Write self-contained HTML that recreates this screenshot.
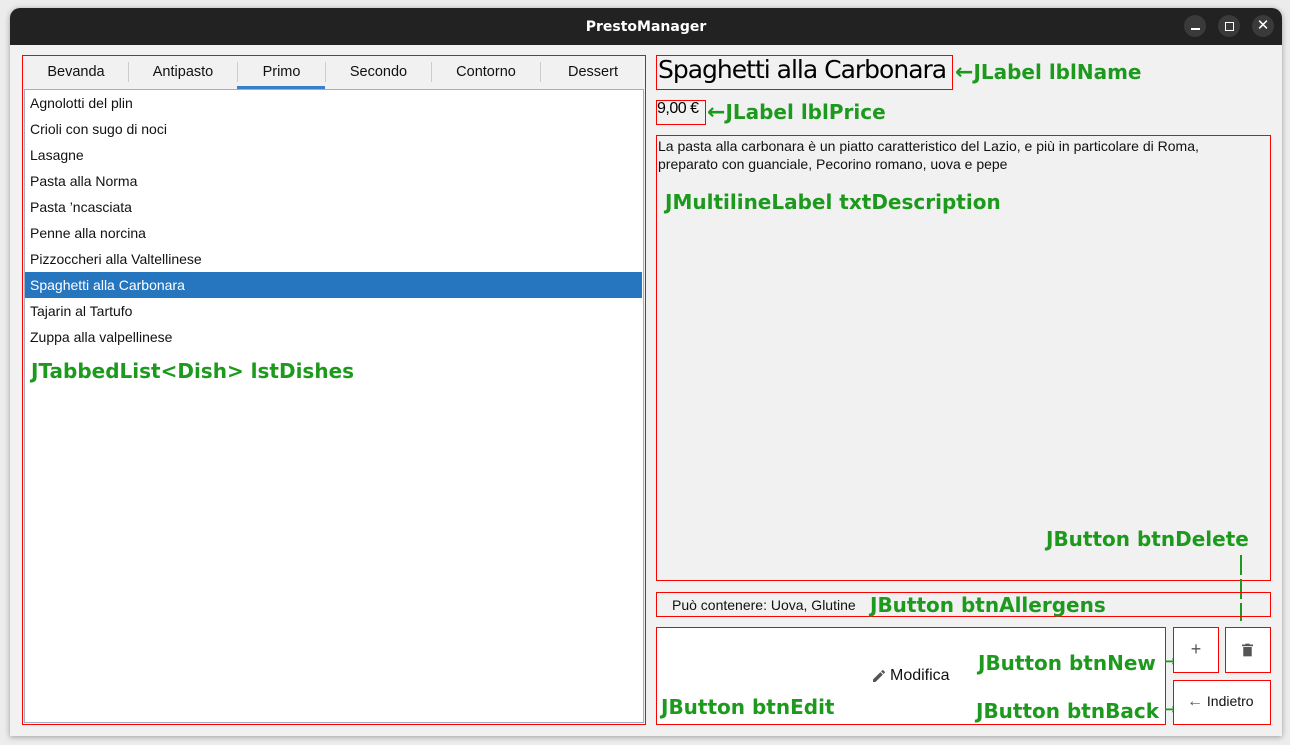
<!DOCTYPE html>
<html><head><meta charset="utf-8"><style>
*{margin:0;padding:0;box-sizing:border-box}
body{width:1290px;height:745px;background:#ececec;position:relative;overflow:hidden;font-family:"Liberation Sans",sans-serif;}
.a{position:absolute}
.g{position:absolute;color:#1d9a1d;font-family:"DejaVu Sans",sans-serif;font-weight:bold;font-size:20px;white-space:nowrap;line-height:1}
.r{position:absolute;border:1px solid #f00}
.tab{position:absolute;top:57px;height:31px;line-height:30px;font-size:14.5px;text-align:center;color:#111}
.sep{position:absolute;top:62px;width:1px;height:20px;background:#ccc}
.row{position:absolute;left:25px;width:617px;height:26px;line-height:26px;padding-left:5px;font-size:14px;color:#111}
</style></head><body>
<div class="a" style="left:10px;top:8px;width:1272px;height:728px;background:#f1f1f1;border-radius:10px 10px 0 0;box-shadow:0 1px 6px rgba(0,0,0,.35);overflow:hidden">
<div class="a" style="left:0;top:0;width:1272px;height:37px;background:#222;color:#fff;font-weight:bold;font-size:14px;text-align:center;line-height:38px;font-family:'DejaVu Sans',sans-serif">PrestoManager</div>
<div class="a" style="left:1174px;top:7px;width:22px;height:22px;border-radius:50%;background:#3a3a3a"></div>
<div class="a" style="left:1181px;top:20px;width:9px;height:2px;background:#fff"></div>
<div class="a" style="left:1208px;top:7px;width:22px;height:22px;border-radius:50%;background:#3a3a3a"></div>
<div class="a" style="left:1215px;top:14px;width:9px;height:9px;border:1.5px solid #fff"></div>
<div class="a" style="left:1242px;top:7px;width:22px;height:22px;border-radius:50%;background:#3a3a3a;color:#fff;text-align:center;line-height:22px;font-size:15px">✕</div>
</div>

<div class="r" style="left:22px;top:55px;width:624px;height:670px"></div>
<div class="tab" style="left:24px;width:104px">Bevanda</div>
<div class="sep" style="left:128px"></div>
<div class="tab" style="left:129px;width:108px">Antipasto</div>
<div class="sep" style="left:237px"></div>
<div class="tab" style="left:238px;width:87px">Primo</div>
<div class="a" style="left:237px;top:86px;width:88px;height:3px;background:#3a80c8"></div>
<div class="sep" style="left:325px"></div>
<div class="tab" style="left:326px;width:105px">Secondo</div>
<div class="sep" style="left:431px"></div>
<div class="tab" style="left:432px;width:108px">Contorno</div>
<div class="sep" style="left:540px"></div>
<div class="tab" style="left:541px;width:104px">Dessert</div>
<div class="a" style="left:24px;top:89px;width:620px;height:634px;background:#fff;border:1px solid #9fb0c4"></div>
<div class="row" style="top:90px">Agnolotti del plin</div>
<div class="row" style="top:116px">Crioli con sugo di noci</div>
<div class="row" style="top:142px">Lasagne</div>
<div class="row" style="top:168px">Pasta alla Norma</div>
<div class="row" style="top:194px">Pasta ’ncasciata</div>
<div class="row" style="top:220px">Penne alla norcina</div>
<div class="row" style="top:246px">Pizzoccheri alla Valtellinese</div>
<div class="row" style="top:272px;background:#2675bf;color:#fff">Spaghetti alla Carbonara</div>
<div class="row" style="top:298px">Tajarin al Tartufo</div>
<div class="row" style="top:324px">Zuppa alla valpellinese</div>
<div class="g" style="left:31px;top:361px">JTabbedList&lt;Dish&gt; lstDishes</div>

<div class="r" style="left:656px;top:55px;width:297px;height:35px"></div>
<div class="a" style="left:658px;top:55px;font-size:25px;line-height:30px;font-family:'DejaVu Sans',sans-serif;letter-spacing:-1px;color:#000">Spaghetti alla Carbonara</div>
<div class="g" style="left:955px;top:62px"><span style="font-size:22px">←</span>JLabel lblName</div>
<div class="r" style="left:656px;top:100px;width:50px;height:25px"></div>
<div class="a" style="left:657px;top:100px;font-size:16px;letter-spacing:-0.5px;color:#000">9,00 €</div>
<div class="g" style="left:707px;top:102px"><span style="font-size:22px">←</span>JLabel lblPrice</div>
<div class="r" style="left:656px;top:135px;width:615px;height:446px"></div>
<div class="a" style="left:658px;top:137px;font-size:14px;line-height:18px;color:#111;letter-spacing:0px">La pasta alla carbonara è un piatto caratteristico del Lazio, e più in particolare di Roma,<br>preparato con guanciale, Pecorino romano, uova e pepe</div>
<div class="g" style="left:665px;top:192px">JMultilineLabel txtDescription</div>
<div class="g" style="left:1046px;top:529px">JButton btnDelete</div>
<div class="a" style="left:1240px;top:555px;width:2px;height:66px;background:repeating-linear-gradient(#1d9a1d 0 20px,transparent 20px 24px)"></div>
<div class="g" style="left:1232px;top:626px;font-size:16px">v</div>

<div class="r" style="left:656px;top:592px;width:615px;height:25px"></div>
<div class="a" style="left:672px;top:597px;font-size:14px;color:#111;letter-spacing:0px">Può contenere: Uova, Glutine</div>
<div class="g" style="left:870px;top:595px">JButton btnAllergens</div>

<div class="r" style="left:656px;top:627px;width:510px;height:98px;background:#fff"></div>
<div class="a" style="left:871px;top:668px;width:16px;height:16px"><svg width="16" height="16" viewBox="0 0 24 24"><path d="M3 17.25V21h3.75L17.8 9.94l-3.75-3.75L3 17.25zM20.7 7.04a1 1 0 0 0 0-1.41l-2.34-2.34a1 1 0 0 0-1.41 0l-1.83 1.83 3.75 3.75 1.83-1.83z" fill="#555"/></svg></div>
<div class="a" style="left:890px;top:667px;font-size:16px;color:#111">Modifica</div>
<div class="g" style="left:661px;top:697px">JButton btnEdit</div>
<div class="g" style="left:978px;top:653px">JButton btnNew</div>
<div class="g" style="left:1164px;top:654px;font-size:15px">→</div>
<div class="g" style="left:976px;top:701px">JButton btnBack</div>
<div class="g" style="left:1164px;top:702px;font-size:15px">→</div>
<div class="r" style="left:1173px;top:627px;width:46px;height:46px;background:#fff;text-align:center;line-height:42px;font-size:18px;color:#555">+</div>
<div class="r" style="left:1225px;top:627px;width:46px;height:46px;background:#fff"></div>
<svg class="a" style="left:1242px;top:643px" width="11" height="14" viewBox="0 0 13 15"><rect x="0" y="1" width="13" height="2" fill="#555"/><rect x="4" y="0" width="5" height="2" fill="#555"/><rect x="1.5" y="4" width="10" height="11" fill="#555"/></svg>
<div class="r" style="left:1173px;top:680px;width:98px;height:45px;background:#fff"></div>
<div class="a" style="left:1187px;top:693px;font-size:14px;color:#111"><span style="color:#555;font-size:16px">←</span> Indietro</div>
</body></html>
